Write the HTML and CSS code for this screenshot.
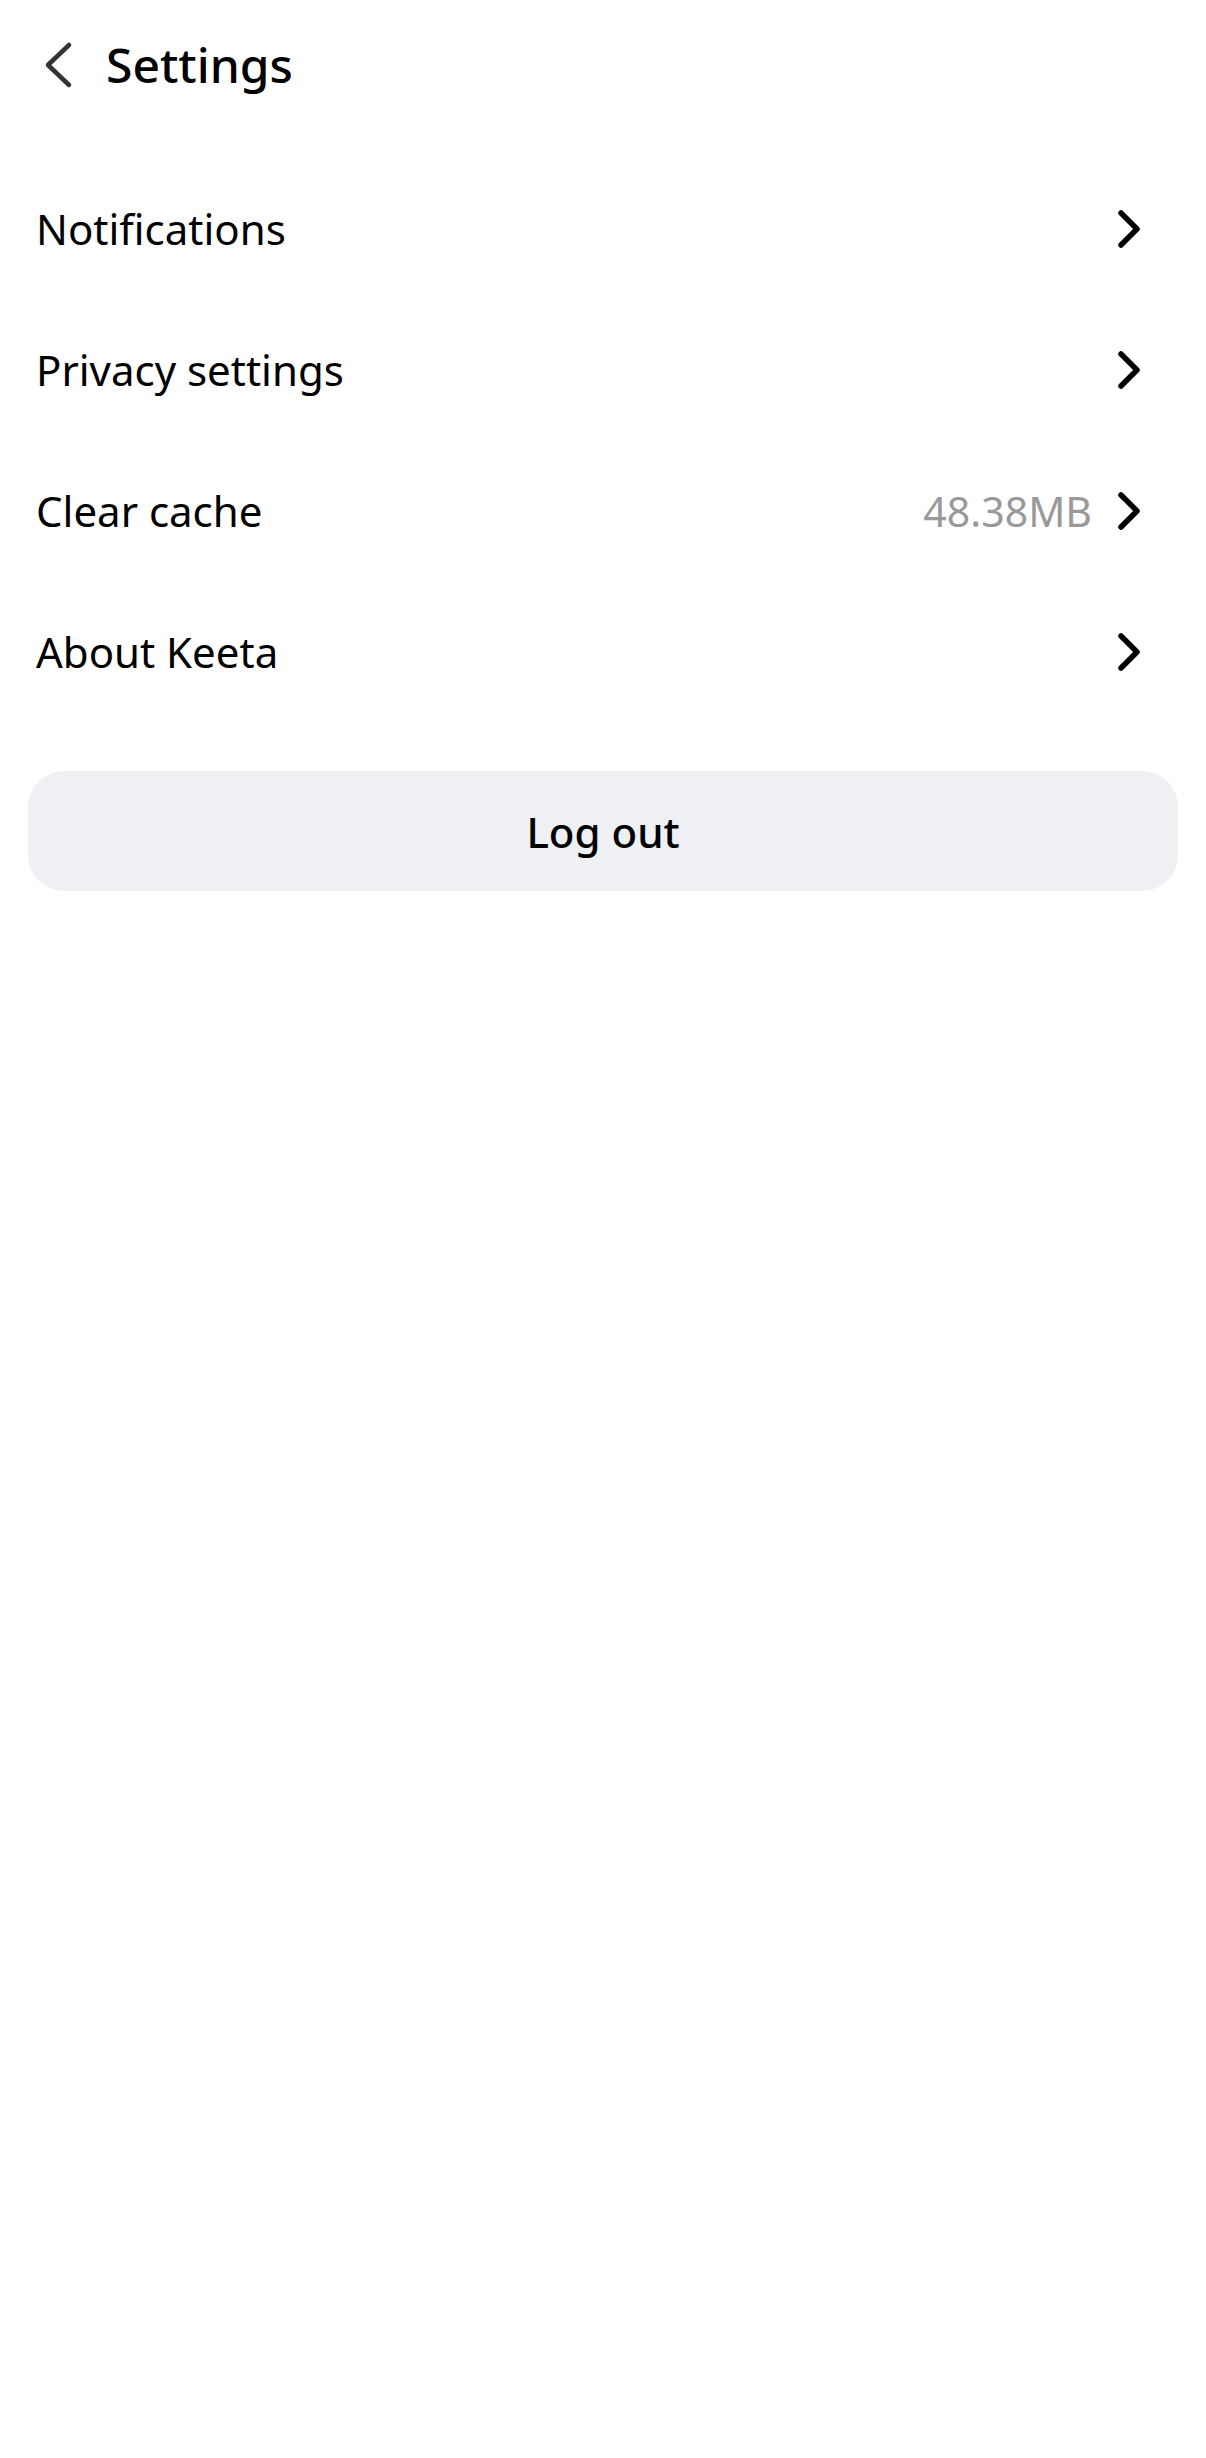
FILE: index.html
```html
<!DOCTYPE html>
<html lang="en">
<head>
<meta charset="utf-8">
<title>Settings</title>
<link rel="stylesheet" href="styles.css">
</head>
<body>
<div class="page">
  <header class="topbar">
    <span class="back">
      <svg width="30" height="48" viewBox="0 0 30 48"><path d="M26 4 L5 24 L26 44" fill="none" stroke="#333" stroke-width="4.5" stroke-linecap="round" stroke-linejoin="round"/></svg>
    </span>
    <h1 class="title">Settings</h1>
  </header>
  <ul class="list">
    <li class="row"><span class="label">Notifications</span><span class="right"><svg class="chev" width="30" height="40" viewBox="0 0 30 40"><path d="M7 4 L23 20 L7 36" fill="none" stroke="#000" stroke-width="5.5" stroke-linecap="round" stroke-linejoin="round"/></svg></span></li>
    <li class="row"><span class="label">Privacy settings</span><span class="right"><svg class="chev" width="30" height="40" viewBox="0 0 30 40"><path d="M7 4 L23 20 L7 36" fill="none" stroke="#000" stroke-width="5.5" stroke-linecap="round" stroke-linejoin="round"/></svg></span></li>
    <li class="row"><span class="label">Clear cache</span><span class="right"><span class="value">48.38MB</span><svg class="chev" width="30" height="40" viewBox="0 0 30 40"><path d="M7 4 L23 20 L7 36" fill="none" stroke="#000" stroke-width="5.5" stroke-linecap="round" stroke-linejoin="round"/></svg></span></li>
    <li class="row"><span class="label">About Keeta</span><span class="right"><svg class="chev" width="30" height="40" viewBox="0 0 30 40"><path d="M7 4 L23 20 L7 36" fill="none" stroke="#000" stroke-width="5.5" stroke-linecap="round" stroke-linejoin="round"/></svg></span></li>
  </ul>
  <div class="actions">
    <button class="logout">Log out</button>
  </div>
</div>
</body>
</html>
```

FILE: styles.css
```css
* { box-sizing: border-box; }
html, body {
  margin: 0;
  padding: 0;
  background: #fff;
}
body {
  font-family: "Noto Sans", "Liberation Sans", sans-serif;
  color: #000;
}
.page {
  width: 1206px;
  min-height: 2458px;
  background: #fff;
}
.topbar {
  height: 130px;
  display: flex;
  align-items: center;
  padding-left: 43px;
  gap: 33px;
}
.back {
  display: flex;
  align-items: center;
}
.title {
  margin: 0;
  font-size: 48px;
  font-weight: 500;
  line-height: 1;
}
.list {
  list-style: none;
  margin: 28px 0 0;
  padding: 0;
}
.row {
  height: 141px;
  display: flex;
  align-items: center;
  justify-content: space-between;
  padding: 0 62px 0 36px;
  font-size: 42px;
}
.right {
  display: flex;
  align-items: center;
  gap: 22px;
}
.value {
  color: #999;
  font-size: 41px;
}
.chev { display: block; }
.actions {
  padding: 49px 28px 0;
}
.logout {
  width: 100%;
  height: 120px;
  border: none;
  border-radius: 36px;
  background: #eff0f4;
  font-family: "Noto Sans", "Liberation Sans", sans-serif;
  font-size: 42px;
  font-weight: 500;
  color: #000;
}
```
